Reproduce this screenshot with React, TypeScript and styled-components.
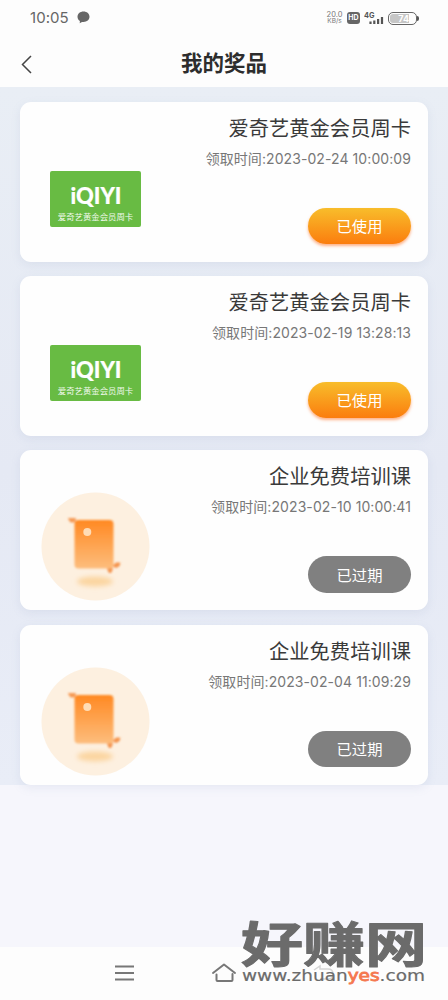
import React from 'react';
import styled, { createGlobalStyle } from 'styled-components';

const GlobalStyle = createGlobalStyle`
  * { box-sizing: border-box; }
  body {
    margin: 0;
    background: #f6f6fc;
    font-family: Inter, "Noto Sans CJK SC", sans-serif;
    color: #333;
  }
`;

const Screen = styled.div`
  width: 448px;
  height: 1000px;
  display: flex;
  flex-direction: column;
  overflow: hidden;
  background: #f6f6fc;
`;

const StatusBar = styled.div`
  height: 36px;
  flex: none;
  display: flex;
  align-items: center;
  padding: 0 30px;
  background: #fdfdfd;
  color: #666;
`;

const Clock = styled.span`
  width: 40px;
  font: 400 15px/20px Inter, sans-serif;
  letter-spacing: 0.05px;
  white-space: nowrap;
`;

const Bubble = styled.svg`
  margin: 0 auto 1px 7px;
`;

const Speed = styled.div`
  width: 17px;
  display: flex;
  flex-direction: column;
  align-items: center;
  font: 400 7.5px/7px Inter, sans-serif;
  color: #777;
`;

const SpeedUnit = styled.span`
  font-size: 6.5px;
`;

const HdBadge = styled.span`
  width: 13px;
  height: 12px;
  margin-left: 4px;
  border-radius: 3px;
  background: #666;
  color: #fff;
  font: 700 7px/12px Inter, sans-serif;
  text-align: center;
`;

const Signal = styled.svg`
  margin-left: 4px;
`;

const Battery = styled.div`
  position: relative;
  width: 29px;
  height: 13px;
  margin-left: 4px;
  margin-right: 1px;
  padding: 1px;
  border: 1px solid #666;
  border-radius: 5px;
  &::after {
    content: '';
    position: absolute;
    right: -3px;
    top: 3px;
    width: 2px;
    height: 5px;
    border-radius: 0 2px 2px 0;
    background: #555;
  }
`;

const BatteryLevel = styled.div`
  width: 19px;
  height: 9px;
  border-radius: 3px 0 0 3px;
  background: #c6c6c6;
  color: #fff;
  font: 700 9px/9px Inter, sans-serif;
  text-align: right;
`;

const Header = styled.header`
  height: 51px;
  flex: none;
  display: grid;
  grid-template-columns: 60px 1fr 60px;
  align-items: center;
  background: #fdfdfd;
`;

const BackIcon = styled.svg`
  margin: 4px 0 0 20px;
`;

const Title = styled.h1`
  margin: 0;
  padding-top: 1px;
  text-align: center;
  font: 700 21.5px/30px "Noto Sans CJK SC", sans-serif;
  color: #2d2d2d;
`;

const PrizeList = styled.main`
  height: 698px;
  flex: none;
  display: flex;
  flex-direction: column;
  gap: 14.4px;
  padding: 14.6px 20px 0;
  background: linear-gradient(#e9eef5, #e5e9f4 55%, #e9edf7);
`;

const Card = styled.article`
  height: 160px;
  flex: none;
  display: flex;
  justify-content: space-between;
  padding: 0 17px 0 21px;
  border-radius: 11px;
  background: #fefefe;
  box-shadow: 0 3px 10px rgba(130, 150, 185, 0.13);
`;

const Picture = styled.div`
  width: 109px;
  padding-top: 42px;
  display: flex;
  justify-content: center;
  align-items: flex-start;
`;

const Voucher = styled.div`
  width: 91px;
  height: 56px;
  margin-top: 27.5px;
  padding-top: 12px;
  border-radius: 2px;
  background: #68bb43;
  color: #fff;
  display: flex;
  flex-direction: column;
  align-items: center;
`;

const VoucherName = styled.span`
  font: 400 8.4px/14px "Noto Sans CJK SC", sans-serif;
  margin-top: 2px;
  color: #f0f9ec;
  white-space: nowrap;
`;

const Info = styled.div`
  display: flex;
  flex-direction: column;
  align-items: flex-end;
  padding-top: 10px;
`;

const Name = styled.h2`
  margin: 0;
  font: 400 20.3px/30px "Noto Sans CJK SC", sans-serif;
  color: #3a3a3a;
`;

const Received = styled.p`
  margin: 6px 0 0;
  font-size: 14px;
  line-height: 22px;
  letter-spacing: 0.08px;
  white-space: nowrap;
  color: #777;
`;

const Status = styled.button<{ $used: boolean }>`
  width: 103px;
  height: 36.5px;
  margin-top: 38px;
  padding: 0 0 2px;
  border: 0;
  border-radius: 19px;
  background: ${p => (p.$used ? 'linear-gradient(#f8bd2b, #fb7d0e)' : '#808080')};
  box-shadow: ${p => (p.$used ? '0 2px 3px rgba(255, 104, 20, 0.5)' : 'none')};
  color: #fff;
  font: 400 15.3px/22px "Noto Sans CJK SC", sans-serif;
`;

const NavBar = styled.nav`
  position: relative;
  height: 53px;
  flex: none;
  margin-top: auto;
  display: flex;
  align-items: center;
  gap: 76px;
  padding: 0 0 1px 113px;
  background: #fdfdfd;
`;

const BackKey = styled.svg`
  opacity: 0.4;
`;

const Watermark = styled.div`
  position: absolute;
  left: 240px;
  top: -34px;
  width: 190px;
  display: flex;
  flex-direction: column;
`;

const WatermarkName = styled.svg`
  display: block;
  overflow: visible;
`;

const LogoArt = styled.svg`
  display: block;
  flex: none;
  overflow: visible;
`;

const IqiyiVoucher = () => (
  <Voucher>
    <LogoArt width="56" height="24" viewBox="0 0 56 24">
      <text x="2.500" y="21" textLength="51" lengthAdjust="spacingAndGlyphs" fill="#fff"
        stroke="#fff" strokeWidth=".2" fontFamily="Lato, sans-serif" fontWeight="900" fontSize="22">iQIYI</text>
    </LogoArt>
    <VoucherName>爱奇艺黄金会员周卡</VoucherName>
  </Voucher>
);

const CourseArt = ({ id }: { id: string }) => (
  <svg width="109" height="109" viewBox="0 0 109 109">
    <defs>
      <linearGradient id={id} x1="0" y1="0" x2="0" y2="1">
        <stop offset="0" stopColor="#ff8922" />
        <stop offset="1" stopColor="#fdbd7d" />
      </linearGradient>
      <filter id={`${id}-shadow`} x="-30%" y="-80%" width="160%" height="260%">
        <feGaussianBlur stdDeviation="2.4" />
      </filter>
      <filter id={`${id}-edge`} x="-10%" y="-10%" width="120%" height="120%">
        <feGaussianBlur stdDeviation="0.8" />
      </filter>
    </defs>
    <circle cx="54.500" cy="54.500" r="54" fill="#fdf0e0" />
    <ellipse cx="54" cy="89.500" rx="18" ry="5" fill="#fbd5a0" filter={`url(#${id}-shadow)`} />
    <g filter={`url(#${id}-edge)`}>
      <path d="M27.500 26.500h7l-1 3.500h-4z" fill="#f59a55" stroke="#f59a55" strokeLinejoin="round" />
      <path d="M72 74l3-3h4l-1 3-3 1.500zM66.500 76.500h5l-1.500 4h-2z" fill="#f49550" stroke="#f49550" strokeLinejoin="round" />
      <rect x="33.500" y="28" width="39" height="48.500" rx="4" fill={`url(#${id})`} />
    </g>
    <circle cx="46.300" cy="40" r="4" fill="#ffdcb5" />
  </svg>
);

const prizes = [
  { name: '爱奇艺黄金会员周卡', time: '2023-02-24 10:00:09', used: true },
  { name: '爱奇艺黄金会员周卡', time: '2023-02-19 13:28:13', used: true },
  { name: '企业免费培训课', time: '2023-02-10 10:00:41', used: false },
  { name: '企业免费培训课', time: '2023-02-04 11:09:29', used: false },
];

export default function App() {
  return (
    <Screen>
      <GlobalStyle />
      <StatusBar>
        <Clock>10:05</Clock>
        <Bubble width="13" height="13" viewBox="0 0 13 13">
          <path d="M6.500 .5C10 .5 12.500 2.700 12.500 5.800S10 11 6.500 11c-.6 0-1 0-1.500-.1L2.700 12.300l.2-2.200C1.400 9.200.5 7.700.5 5.800.5 2.700 3 .5 6.500.5z" fill="#666" />
        </Bubble>
        <Speed><span>20.0</span><SpeedUnit>KB/s</SpeedUnit></Speed>
        <HdBadge>HD</HdBadge>
        <Signal width="20" height="14" viewBox="0 0 20 14">
          <text x="0" y="6.800" fontFamily="Inter, sans-serif" fontWeight="700" fontSize="8" textLength="10.500" lengthAdjust="spacingAndGlyphs" fill="#555">4G</text>
          <path d="M6.500 10.500v2.500M10.300 9.500V13M14.100 8v5M18 6v7" stroke="#555" strokeWidth="2.200" />
        </Signal>
        <Battery><BatteryLevel>74</BatteryLevel></Battery>
      </StatusBar>
      <Header>
        <BackIcon width="14" height="20" viewBox="0 0 14 20" fill="none" stroke="#444" strokeWidth="1.500">
          <path d="M11 2L2.500 10.500 11 19" />
        </BackIcon>
        <Title>我的奖品</Title>
      </Header>
      <PrizeList>
        {prizes.map((p, i) => (
          <Card key={p.time}>
            <Picture>{p.used ? <IqiyiVoucher /> : <CourseArt id={`course${i}`} />}</Picture>
            <Info>
              <Name>{p.name}</Name>
              <Received>领取时间:{p.time}</Received>
              <Status $used={p.used}>{p.used ? '已使用' : '已过期'}</Status>
            </Info>
          </Card>
        ))}
      </PrizeList>
      <NavBar>
        <svg width="22" height="18" viewBox="0 0 22 18" stroke="#777" strokeWidth="2">
          <path d="M2 2.500h19M2 9h19M2 15.500h19" />
        </svg>
        <svg width="26" height="20" viewBox="0 0 26 20" fill="none" stroke="#777" strokeWidth="2" strokeLinecap="round" strokeLinejoin="round">
          <path d="M2 10L13 1.500 24 10M5.500 11.500v5.500q0 1 1 1h14q1 0 1-1v-6" />
        </svg>
        <BackKey width="22" height="18" viewBox="0 0 22 18" fill="none" stroke="#999" strokeWidth="1.500">
          <path d="M1 6l6-4v3h8q5 0 5 5t-5 5H7" />
        </BackKey>
        <Watermark>
          <WatermarkName width="190" height="54" viewBox="0 0 190 54">
            <text x="1" y="49" fontFamily="'Noto Sans CJK SC', sans-serif" fontWeight="700" fontSize="48" textLength="186" lengthAdjust="spacingAndGlyphs"
              fill="#6b6b6b" stroke="#6b6b6b" strokeWidth="1" strokeLinejoin="round">好赚网</text>
          </WatermarkName>
          <svg width="190" height="20" viewBox="0 0 190 20">
            <text x="2" y="13.500" fontFamily="'DejaVu Sans', sans-serif" fontSize="15" textLength="183" lengthAdjust="spacingAndGlyphs" fill="#6b6b6b" stroke="#6b6b6b" strokeWidth=".2">
              www.zhuan<tspan fill="#f5784f" stroke="#f5784f" strokeWidth=".8">yes</tspan>.com
            </text>
          </svg>
        </Watermark>
      </NavBar>
    </Screen>
  );
}
